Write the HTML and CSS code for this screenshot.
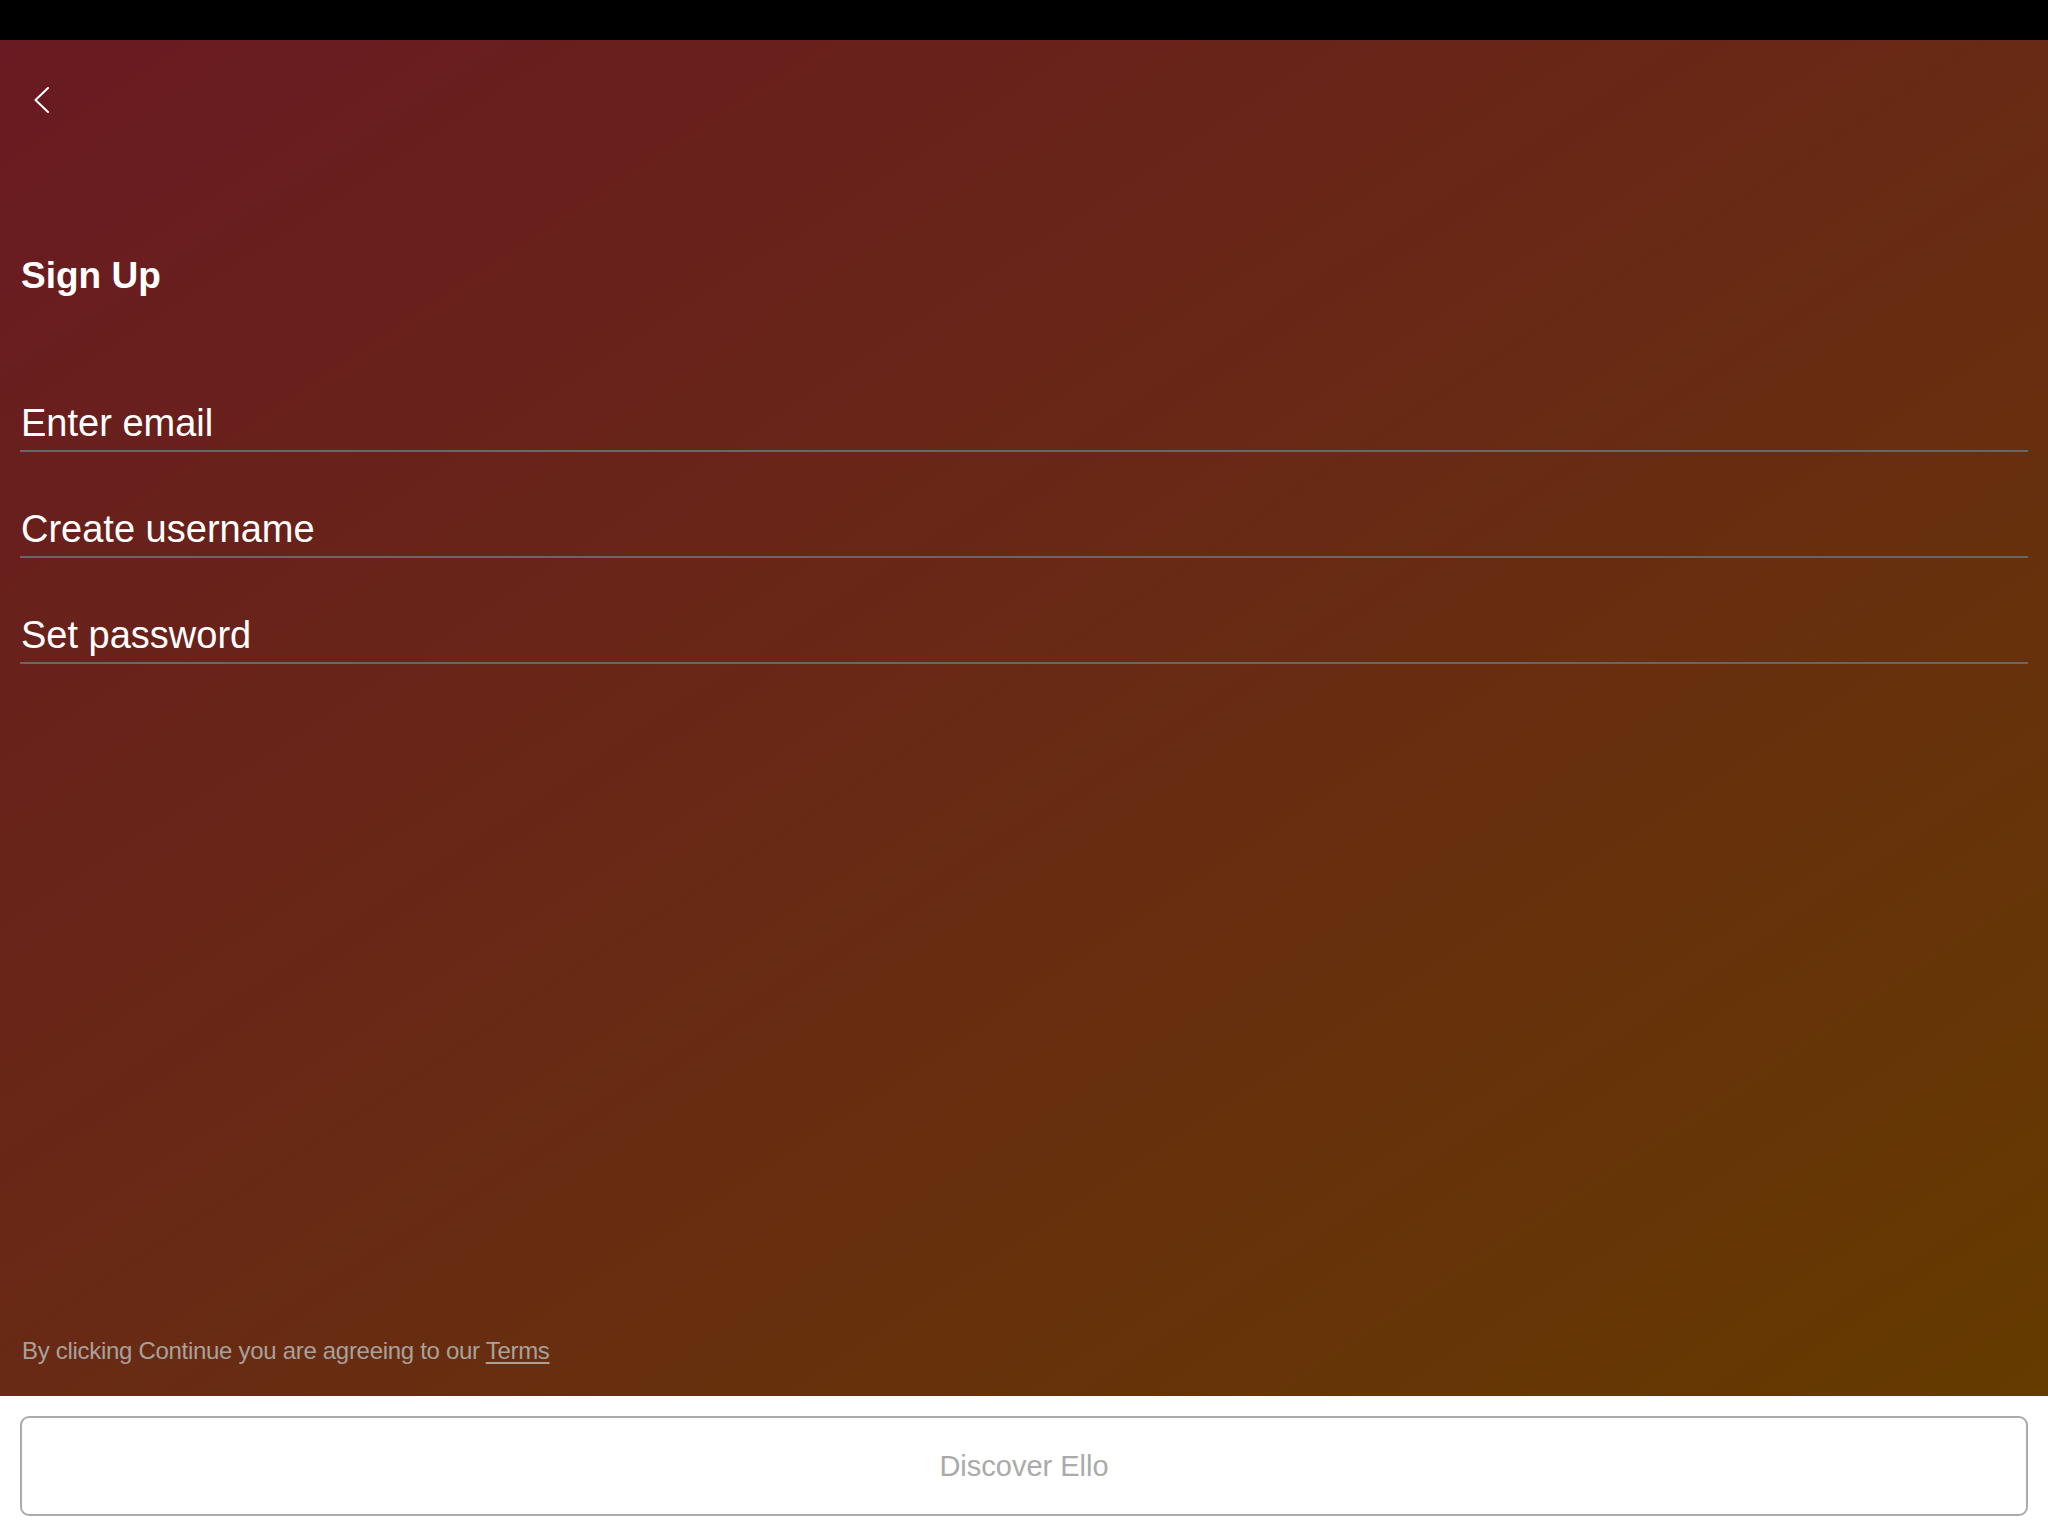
FILE: index.html
```html
<!DOCTYPE html>
<html lang="en">
<head>
<meta charset="utf-8">
<title>Sign Up</title>
<link rel="stylesheet" href="styles.css">
</head>
<body>
<div class="status-bar"></div>
<main class="signup">
  <div class="top">
    <button class="back" aria-label="Back">
      <svg width="16" height="26" viewBox="0 0 16 26"><path d="M14 1 L1.5 13 L14 25" fill="none" stroke="#fff" stroke-width="2" stroke-linecap="round" stroke-linejoin="round"/></svg>
    </button>
    <h1 class="title">Sign Up</h1>
    <div class="fields">
      <div class="field">Enter email</div>
      <div class="field">Create username</div>
      <div class="field">Set password</div>
    </div>
  </div>
  <p class="terms">By clicking Continue you are agreeing to our <span class="terms-link">Terms</span></p>
</main>
<footer class="footer">
  <button class="discover">Discover Ello</button>
</footer>
</body>
</html>
```
FILE: styles.css
```css
html, body {
  margin: 0;
  padding: 0;
  height: 1536px;
  overflow: hidden;
  background: #fff;
  font-family: "Liberation Sans", Arial, sans-serif;
}
.status-bar {
  height: 40px;
  background: #000;
}
.signup {
  height: 1356px;
  box-sizing: border-box;
  background: linear-gradient(to bottom right, #6a1a22 0%, #682a14 50%, #653b00 100%);
  display: flex;
  flex-direction: column;
  justify-content: space-between;
  padding: 47px 20px 31px 20px;
}
.back {
  display: block;
  background: none;
  border: 0;
  padding: 0;
  margin: 0 0 0 14px;
  width: 16px;
  height: 26px;
}
.back svg { display: block; }
.title {
  margin: 141px 0 0 1px;
  color: #fff;
  font-size: 37px;
  line-height: 44px;
  font-weight: 700;
}
.fields {
  margin-top: 103px;
  display: flex;
  flex-direction: column;
  gap: 55px;
}
.field {
  color: #fff;
  font-size: 38px;
  line-height: 44px;
  padding: 0 0 5px 1px;
  border-bottom: 2px solid #676767;
}
.terms {
  margin: 0 0 0 2px;
  color: #a9a19b;
  font-size: 24px;
  line-height: 28px;
  letter-spacing: -0.3px;
}
.terms-link {
  text-decoration: underline;
  text-underline-offset: 3px;
}
.footer {
  height: 140px;
  box-sizing: border-box;
  padding: 20px 20px 0 20px;
}
.discover {
  display: block;
  width: 100%;
  height: 100px;
  background: #fff;
  border: 2px solid #ababab;
  border-radius: 9px;
  color: #aaaaaa;
  font-family: "Liberation Sans", Arial, sans-serif;
  font-size: 29px;
  padding: 0;
}
```
